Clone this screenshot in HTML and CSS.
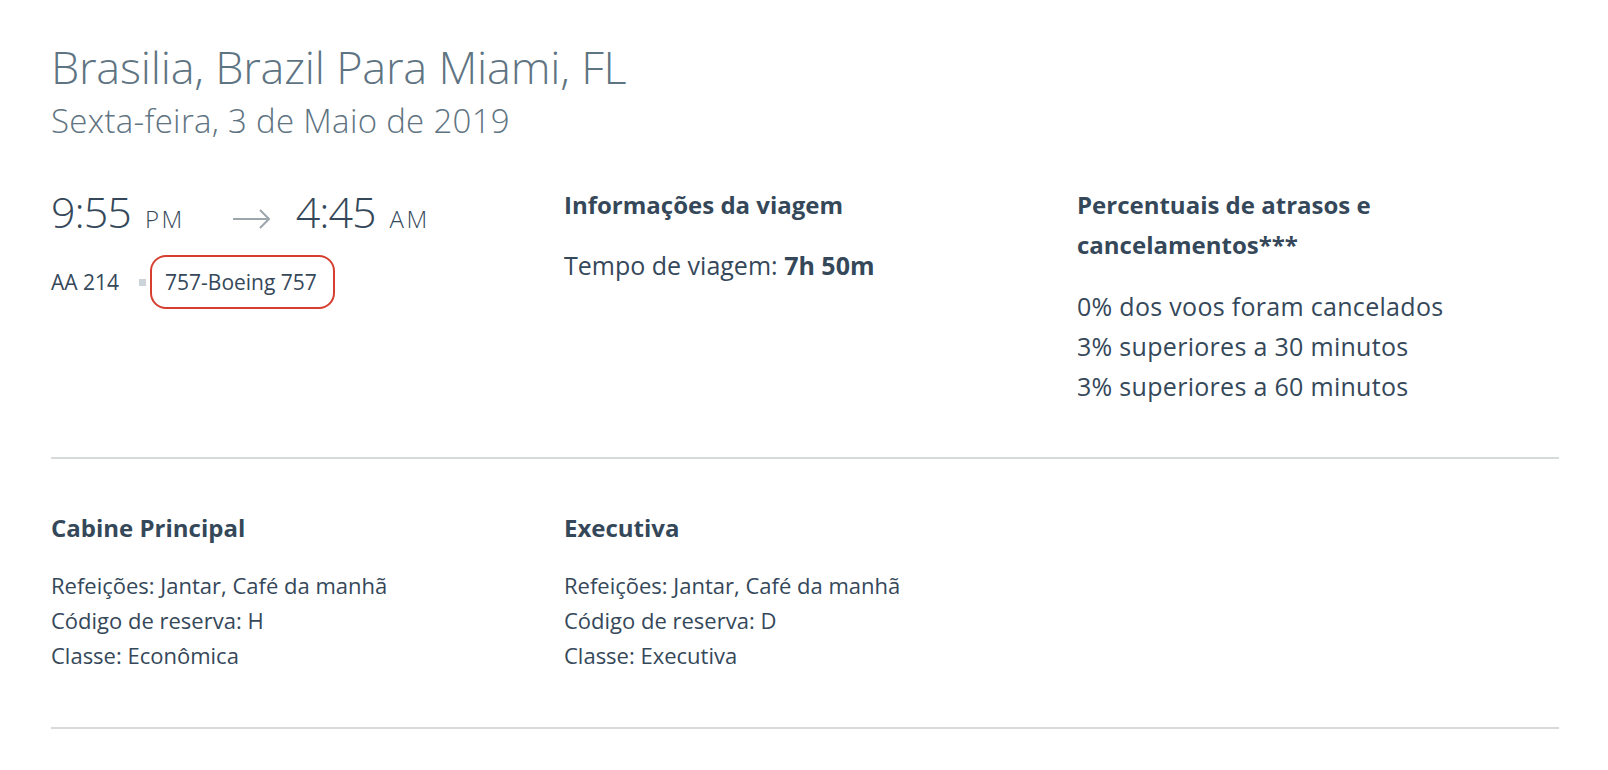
FILE: index.html
```html
<!DOCTYPE html>
<html lang="pt">

<head>
    <meta charset="UTF-8">
    <title>Detalhes do voo</title>
    <link rel="stylesheet" href="styles.css">
</head>

<body>

    <div class="trip">
        <!-- Title -->
        <h1 class="trip-title">Brasilia, Brazil Para Miami, FL</h1>
        <p class="trip-date">Sexta-feira, 3 de Maio de 2019</p>

        <!-- Flight summary -->
        <div class="row summary">
            <div class="col">
                <div class="times">
                    <span class="time">9:55</span><span class="ampm">PM</span>
                    <svg class="arrow" width="38" height="20" viewBox="0 0 38 20">
                        <path d="M0 10 H36 M27 1 L36 10 L27 19" fill="none" stroke="#9ca6ab" stroke-width="2"/>
                    </svg>
                    <span class="time">4:45</span><span class="ampm">AM</span>
                </div>
                <div class="flight-meta">
                    <span class="flight-no">AA 214</span>
                    <span class="dot"></span>
                    <span class="aircraft">757-Boeing 757</span>
                </div>
            </div>
            <div class="col">
                <h3 class="col-title">Informações da viagem</h3>
                <p class="info">Tempo de viagem: <b>7h 50m</b></p>
            </div>
            <div class="col">
                <h3 class="col-title">Percentuais de atrasos e cancelamentos***</h3>
                <ul class="stats">
                    <li>0% dos voos foram cancelados</li>
                    <li>3% superiores a 30 minutos</li>
                    <li>3% superiores a 60 minutos</li>
                </ul>
            </div>
        </div>

        <!-- Cabins -->
        <div class="row cabins">
            <div class="col">
                <h4 class="cabin-title">Cabine Principal</h4>
                <ul class="cabin-list">
                    <li>Refeições: Jantar, Café da manhã</li>
                    <li>Código de reserva: H</li>
                    <li>Classe: Econômica</li>
                </ul>
            </div>
            <div class="col">
                <h4 class="cabin-title">Executiva</h4>
                <ul class="cabin-list">
                    <li>Refeições: Jantar, Café da manhã</li>
                    <li>Código de reserva: D</li>
                    <li>Classe: Executiva</li>
                </ul>
            </div>
            <div class="col"></div>
        </div>
    </div>

</body>

</html>
```

FILE: styles.css
```css
/* Global */
body {
    font-family: 'Open Sans', sans-serif;
    background-color: #ffffff;
    color: #35485a;
    margin: 0;
    padding: 0;
}

h1, h3, h4, p, ul {
    margin: 0;
    padding: 0;
}

ul {
    list-style: none;
}

.trip {
    width: 1508px;
    padding: 39px 0 0 51px;
}

/* Title */
.trip-title {
    font-size: 45px;
    font-weight: 300;
    line-height: 56px;
    color: #5f7482;
    letter-spacing: -0.2px;
}

.trip-date {
    font-size: 33px;
    font-weight: 300;
    line-height: 52px;
    color: #5f7482;
    letter-spacing: 0.3px;
}

/* Rows */
.row {
    display: grid;
    grid-template-columns: 1fr 1fr 1fr;
    column-gap: 31px;
    border-bottom: 2px solid #d6dadb;
}

.summary {
    padding: 40px 0 51px;
}

.cabins {
    padding: 51px 0 54px;
}

/* Times */
.times {
    display: flex;
    align-items: baseline;
    line-height: 50px;
}

.time {
    font-size: 43px;
    font-weight: 300;
    letter-spacing: -1px;
}

.ampm {
    font-size: 24px;
    font-weight: 300;
    letter-spacing: 2.5px;
    margin-left: 14px;
}

.arrow {
    margin: 6px 25px 0 48px;
    align-self: center;
}

.flight-meta {
    display: flex;
    align-items: center;
    margin-top: 11px;
    font-size: 21px;
}

.dot {
    width: 7px;
    height: 7px;
    background-color: #cdd4d9;
    margin: 0 4px 0 20px;
}

.aircraft {
    border: 2px solid #d63f2f;
    border-radius: 16px;
    line-height: 28px;
    padding: 11px 16px 11px 13px;
}

/* Columns */
.col-title {
    font-size: 24px;
    font-weight: 700;
    line-height: 40px;
    margin-top: -2px;
}

.info {
    font-size: 25px;
    line-height: 40px;
    margin-top: 20px;
}

.info b {
    font-weight: 700;
}

.stats {
    font-size: 25px;
    line-height: 40px;
    margin-top: 21px;
    letter-spacing: 0.3px;
}

/* Cabins */
.cabin-title {
    font-size: 24px;
    font-weight: 700;
    line-height: 36px;
}

.cabin-list {
    margin-top: 22px;
    font-size: 22px;
    line-height: 35px;
}
```
